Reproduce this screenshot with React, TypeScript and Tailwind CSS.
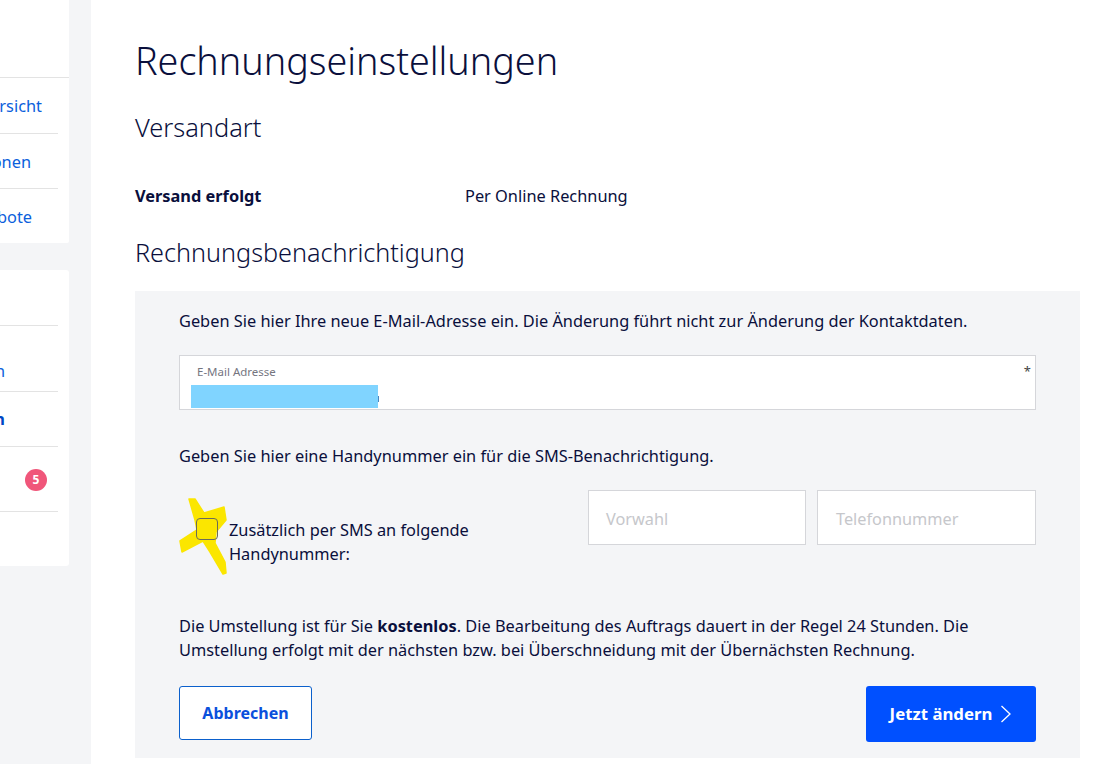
import React from "react";

const F = { fontFamily: '"Noto Sans", "Open Sans", sans-serif' };

function Row({ text, h, line = true, bold = false, wide = false, pr = "pr-[16px]", pt = "pt-[2px]", children }: { text?: string; h: string; line?: boolean; bold?: boolean; wide?: boolean; pr?: string; pt?: string; children?: React.ReactNode }) {
  return (
    <div className={`${h} ${pt} ${line ? "border-b border-[#e3e3e3]" : ""} ${wide ? "" : "mr-[11px]"} flex items-center justify-end overflow-hidden whitespace-nowrap text-[16.35px] ${bold ? "font-bold text-[#0047c4]" : "text-[#0b5fdc]"}`}>
      {text ? <span className={pr}>{text}</span> : null}
      {children}
    </div>
  );
}

function Sidebar() {
  return (
    <aside className="w-[91px] shrink-0 bg-[#f4f5f7] pr-[22px]">
      <div className="h-[243px] bg-white rounded-br-[2px] flex flex-col">
        <Row h="h-[78px]" wide />
        <Row h="h-[56px]" text="Rechnungsübersicht" pr="pr-[16px]" />
        <Row h="h-[55px]" text="Optionen" pr="pr-[27px]" />
        <Row h="h-[54px]" text="Angebote" pr="pr-[26px]" line={false} />
      </div>
      <div className="mt-[27px] h-[296px] bg-white rounded-r-[3px] flex flex-col">
        <Row h="h-[56px]" />
        <Row h="h-[66px]" text="Zahlungen" pr="pr-[53px]" pt="pt-[26px]" />
        <Row h="h-[55px]" text="Rechnungen" pr="pr-[53px]" bold pt="pt-0" />
        <Row h="h-[65px]">
          <span className="mr-[11px] flex h-[22px] w-[22px] items-center justify-center rounded-full bg-[#f0567a] text-[12px] font-bold text-white">5</span>
        </Row>
      </div>
    </aside>
  );
}

export default function App() {
  return (
    <div style={F} className="flex h-[764px] w-[1102px] overflow-hidden bg-white text-[#0a0f3c]">
      <Sidebar />
      <main className="flex-1 pl-[44px] pr-[22px]">
        <h1 className="mt-[35px] text-[37.7px] leading-[52px] font-light">Rechnungseinstellungen</h1>
        <h2 className="mt-[22px] text-[25.4px] leading-[36px] font-light">Versandart</h2>
        <div className="mt-[39px] flex text-[16.35px] leading-[24px]">
          <span className="w-[330px] font-bold">Versand erfolgt</span>
          <span>Per Online Rechnung</span>
        </div>
        <h2 className="mt-[26px] text-[25.2px] leading-[36px] font-light">Rechnungsbenachrichtigung</h2>
        <section className="mt-[21px] h-[467px] bg-[#f4f5f7] px-[44px] pt-[18px] text-[16.35px] leading-[24px]">
          <p className="whitespace-nowrap">Geben Sie hier Ihre neue E-Mail-Adresse ein. Die Änderung führt nicht zur Änderung der Kontaktdaten.</p>
          <div className="relative mt-[22px] h-[55px] border border-[#d5d6da] bg-white">
            <span className="absolute left-[17px] top-[8px] text-[11.5px] leading-[16px] text-[#75757f]">E-Mail Adresse</span>
            <span className="absolute right-[4px] top-[6px] text-[13px] leading-[18px] text-[#444]">*</span>
            <div className="absolute left-[11px] top-[29px] h-[23px] w-[187px] bg-[#80d4ff]" />
            <div className="absolute left-[198px] top-[40px] h-[6px] w-[1px] bg-[#4a86c0]" />
          </div>
          <p className="mt-[34px]">Geben Sie hier eine Handynummer ein für die SMS-Benachrichtigung.</p>
          <div className="mt-[22px] flex">
            <label className="relative flex w-[409px] pt-[28px]">
              <svg className="absolute left-0 top-[7px]" width="48" height="80" viewBox="0 0 48 80" fill="#fbe600" stroke="#fbe600" strokeWidth="1.5" strokeLinejoin="round">
                <path d="M10 2 L16 2 L25 16 L45 10 L47 23 L37 35 L36 46 L46 65 L47 76 L44 77 L31 55 L24 44 L3 55 L1 44 L18 33 L16 23 Z" />
              </svg>
              <span className="absolute left-[17px] top-[28px] h-[22px] w-[22px] rounded-[4px] border border-[#6b6b5a]" />
              <span className="ml-[50px] w-[270px]">Zusätzlich per SMS an folgende Handynummer:</span>
            </label>
            <div className="flex h-[55px] flex-1 gap-[11px] text-[16.3px] text-[#c6c7cb]">
              <div className="flex w-[218px] items-center border border-[#d5d6da] bg-white pl-[17px] pt-[2px]">Vorwahl</div>
              <div className="flex flex-1 items-center border border-[#d5d6da] bg-white pl-[18px] pt-[2px]">Telefonnummer</div>
            </div>
          </div>
          <p className="mt-[48px]">
            Die Umstellung ist für Sie <b>kostenlos</b>. Die Bearbeitung des Auftrags dauert in der Regel 24 Stunden. Die Umstellung erfolgt mit der nächsten bzw. bei Überschneidung mit der Übernächsten Rechnung.
          </p>
          <div className="mt-[24px] flex items-start justify-between">
            <button className="h-[54px] w-[133px] rounded-[3px] border border-[#0b60cc] bg-white text-[16px] font-bold text-[#0b50dc]">Abbrechen</button>
            <button className="flex h-[56px] w-[170px] items-center justify-center gap-[8px] rounded-[3px] bg-[#0050ff] text-[16.8px] font-bold text-white">
              Jetzt ändern
              <svg width="12" height="18" viewBox="0 0 12 18" fill="none" stroke="white" strokeWidth="1.3"><path d="M1.5 1 L10 9 L1.5 17" /></svg>
            </button>
          </div>
        </section>
      </main>
    </div>
  );
}
